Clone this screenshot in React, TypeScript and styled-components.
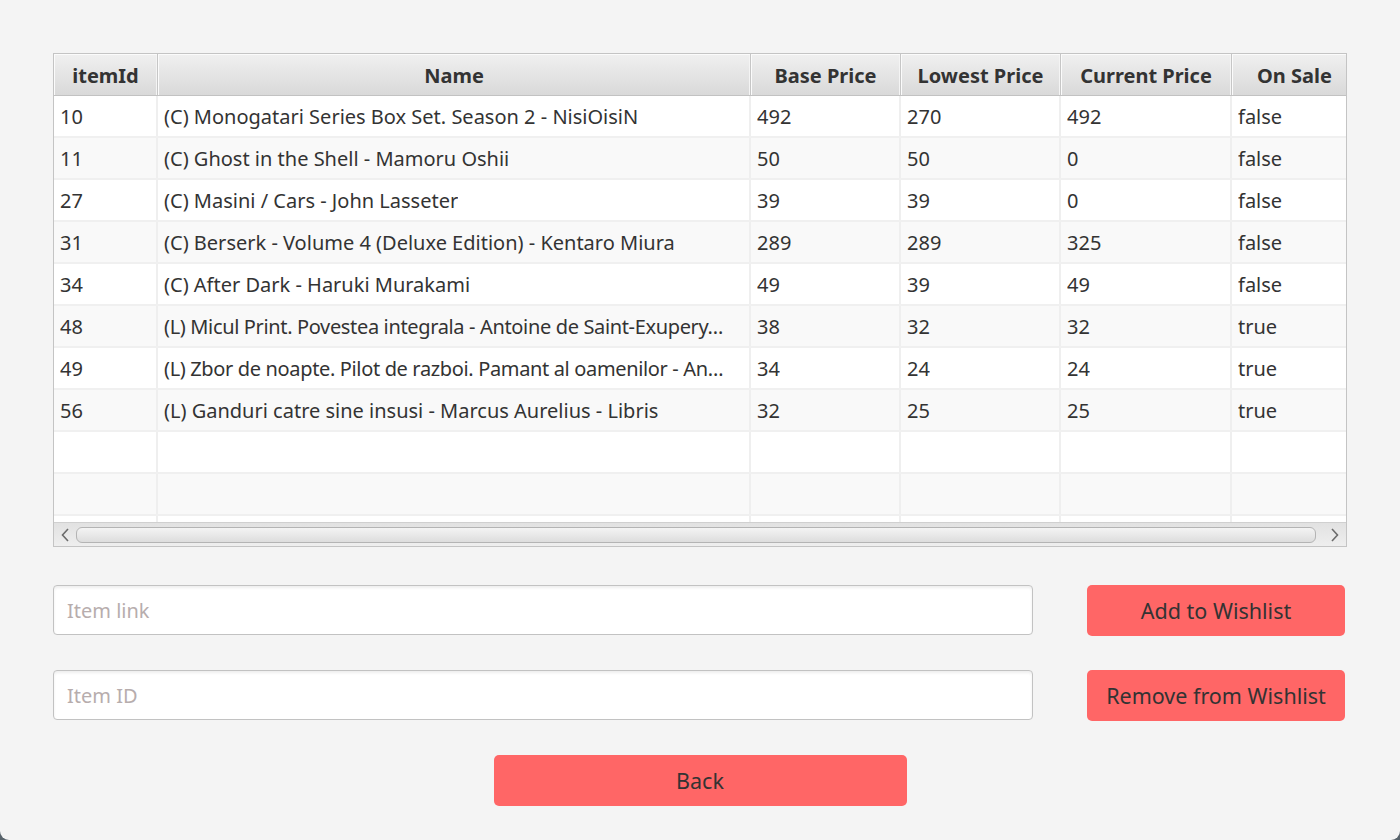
import React from "react";
import styled, { createGlobalStyle } from "styled-components";

const Global = createGlobalStyle`
  html, body { margin: 0; padding: 0; background: #58636b; }
  body { font-family: "Noto Sans", "Open Sans", sans-serif; }
  * { box-sizing: border-box; }
`;

const Window = styled.div`
  width: 1400px;
  height: 840px;
  background: #f4f4f4;
  border-radius: 0 0 9px 9px;
  padding: 53px 53px 0 53px;
  display: flex;
  flex-direction: column;
  color: #333333;
`;

const Table = styled.div`
  height: 494px;
  border: 1px solid #c4c4c4;
  background: #ffffff;
  display: flex;
  flex-direction: column;
  overflow: hidden;
`;

const cols = "104px 593px 150px 160px 171px 126px";

const HeaderRow = styled.div`
  display: grid;
  grid-template-columns: ${cols};
  height: 42px;
  flex: none;
  background: linear-gradient(#f0f0f0, #d9d9d9);
  border-bottom: 1px solid #c2c2c2;
`;

const HeaderCell = styled.div`
  display: flex;
  align-items: center;
  justify-content: center;
  padding-top: 2px;
  font-weight: 700;
  font-size: 20px;
  color: #333;
  border-right: 1px solid #c6c6c6;
  box-shadow: inset 1px 1px 0 #fbfbfb, inset -1px 0 0 #f4f4f4;
  white-space: nowrap;
`;

const Body = styled.div`
  flex: 1;
  overflow: hidden;
`;

const Row = styled.div<{ $alt: boolean }>`
  display: grid;
  grid-template-columns: ${cols};
  height: 42px;
  background: ${(p) => (p.$alt ? "#f9f9f9" : "#ffffff")};
  border-bottom: 2px solid #f0f0f0;
`;

const Cell = styled.div<{ $tight?: boolean }>`
  display: flex;
  align-items: center;
  padding: 1px 6px 0;
  font-size: 20px;
  letter-spacing: ${(p) => (p.$tight ? "-0.35px" : "normal")};
  color: #333;
  border-right: 2px solid #efefef;
  white-space: nowrap;
  overflow: hidden;
  min-width: 0;
`;

const Ellip = styled.span`
  overflow: hidden;
  text-overflow: ellipsis;
  white-space: nowrap;
  display: block;
`;

const ScrollBar = styled.div`
  height: 24px;
  flex: none;
  display: flex;
  align-items: center;
  background: linear-gradient(#e2e2e2, #eeeeee);
  border-top: 1px solid #d0d0d0;
  padding: 0 2px;
  gap: 2px;
`;

const Arrow = styled.div`
  width: 18px;
  height: 22px;
  display: flex;
  align-items: center;
  justify-content: center;
  flex: none;
`;

const Thumb = styled.div`
  flex: 1;
  height: 16px;
  border-radius: 6px;
  border: 1px solid #b4b4b4;
  background: linear-gradient(#f4f4f4, #dddddd);
  margin: 0 8px 0 0;
`;

const FormRow = styled.div<{ $top: number }>`
  display: flex;
  align-items: flex-start;
  gap: 54px;
  margin-top: ${(p) => p.$top}px;
  margin-right: 2px;
`;

const Input = styled.input`
  flex: 1;
  min-width: 0;
  height: 50px;
  border: 1px solid #c2c2c2;
  border-radius: 4px;
  background: #ffffff;
  box-shadow: inset 0 2px 3px rgba(0, 0, 0, 0.07);
  padding: 0 13px;
  font-family: "Noto Sans", "Open Sans", sans-serif;
  font-size: 20px;
  color: #333;
  outline: none;
  &::placeholder { color: #b7adad; }
`;

const Button = styled.button<{ $w: number }>`
  width: ${(p) => p.$w}px;
  height: 51px;
  flex: none;
  background: #ff6666;
  border: none;
  border-radius: 5px;
  font-family: "Noto Sans", "Open Sans", sans-serif;
  font-size: 21.5px;
  color: #333333;
  padding: 0;
`;

const Center = styled.div`
  display: flex;
  justify-content: center;
  margin-top: 34px;
`;

const headers = ["itemId", "Name", "Base Price", "Lowest Price", "Current Price", "On Sale"];

const data: string[][] = [
  ["10", "(C) Monogatari Series Box Set. Season 2 - NisiOisiN", "492", "270", "492", "false"],
  ["11", "(C) Ghost in the Shell - Mamoru Oshii", "50", "50", "0", "false"],
  ["27", "(C) Masini / Cars - John Lasseter", "39", "39", "0", "false"],
  ["31", "(C) Berserk - Volume 4 (Deluxe Edition) - Kentaro Miura", "289", "289", "325", "false"],
  ["34", "(C) After Dark - Haruki Murakami", "49", "39", "49", "false"],
  ["48", "(L) Micul Print. Povestea integrala - Antoine de Saint-Exupery…", "38", "32", "32", "true"],
  ["49", "(L) Zbor de noapte. Pilot de razboi. Pamant al oamenilor - An…", "34", "24", "24", "true"],
  ["56", "(L) Ganduri catre sine insusi - Marcus Aurelius - Libris", "32", "25", "25", "true"],
];

const rows = [...data, ...Array.from({ length: 3 }, () => ["", "", "", "", "", ""])];

export default function App() {
  return (
    <>
      <Global />
      <Window>
        <Table>
          <HeaderRow>
            {headers.map((h) => (
              <HeaderCell key={h}>{h}</HeaderCell>
            ))}
          </HeaderRow>
          <Body>
            {rows.map((r, i) => (
              <Row key={i} $alt={i % 2 === 1}>
                {r.map((c, j) => (
                  <Cell key={j} $tight={c.endsWith("…")}>
                    <Ellip>{c}</Ellip>
                  </Cell>
                ))}
              </Row>
            ))}
          </Body>
          <ScrollBar>
            <Arrow>
              <svg width="8" height="14" viewBox="0 0 8 14">
                <path d="M7 1 L1.5 7 L7 13" fill="none" stroke="#6b6b6b" strokeWidth="1.6" />
              </svg>
            </Arrow>
            <Thumb />
            <Arrow>
              <svg width="8" height="14" viewBox="0 0 8 14">
                <path d="M1 1 L6.5 7 L1 13" fill="none" stroke="#6b6b6b" strokeWidth="1.6" />
              </svg>
            </Arrow>
          </ScrollBar>
        </Table>
        <FormRow $top={38}>
          <Input placeholder="Item link" />
          <Button $w={258}>Add to Wishlist</Button>
        </FormRow>
        <FormRow $top={34}>
          <Input placeholder="Item ID" />
          <Button $w={258}>Remove from Wishlist</Button>
        </FormRow>
        <Center>
          <Button $w={413}>Back</Button>
        </Center>
      </Window>
    </>
  );
}
